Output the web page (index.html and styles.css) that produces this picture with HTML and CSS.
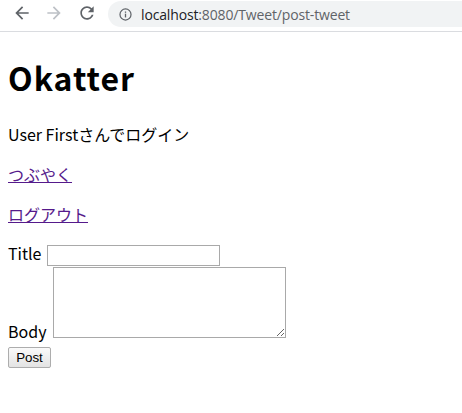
FILE: index.html
```html
<!DOCTYPE html>
<html lang="ja">
<head>
<meta charset="utf-8">
<title>Okatter</title>
<link rel="stylesheet" href="styles.css">
</head>
<body>
<div class="toolbar">
  <div class="nav">
    <svg class="icon" viewBox="0 0 24 24" width="20" height="20"><path fill="#5f6368" d="M20 11H7.83l5.59-5.59L12 4l-8 8 8 8 1.41-1.41L7.83 13H20v-2z"/></svg>
    <svg class="icon" viewBox="0 0 24 24" width="20" height="20"><path fill="#bdc1c6" d="M4 11h12.17l-5.59-5.59L12 4l8 8-8 8-1.41-1.41L16.17 13H4v-2z"/></svg>
    <svg class="icon" viewBox="0 0 24 24" width="20" height="20"><path fill="#5f6368" d="M17.65 6.35C16.2 4.9 14.21 4 12 4c-4.42 0-7.99 3.58-7.99 8s3.57 8 7.99 8c3.73 0 6.84-2.55 7.73-6h-2.08c-.82 2.33-3.04 4-5.650 4-3.31 0-6-2.690-6-6s2.69-6 6-6c1.66 0 3.14.69 4.22 1.78L13 11h7V4l-2.35 2.35z"/></svg>
  </div>
  <div class="omnibox">
    <svg class="info" viewBox="0 0 16 16" width="13" height="13"><circle cx="8" cy="8" r="6.8" fill="none" stroke="#5f6368" stroke-width="1.5"/><rect x="7.2" y="7" width="1.6" height="4.6" fill="#5f6368"/><rect x="7.2" y="4.3" width="1.6" height="1.6" fill="#5f6368"/></svg>
    <span class="url"><span class="host">localhost</span>:8080/Tweet/post-tweet</span>
  </div>
</div>
<main class="page">
  <h1 class="title">Okatter</h1>
  <p class="line">User Firstさんでログイン</p>
  <p class="line"><a class="link" href="#">つぶやく</a></p>
  <p class="line"><a class="link" href="#">ログアウト</a></p>
  <form class="form">
    <label class="label">Title <input class="input" type="text" name="title"></label><br>
    <label class="label">Body <textarea class="textarea" name="body"></textarea></label><br>
    <button class="button" type="button">Post</button>
  </form>
</main>
</body>
</html>
```
FILE: styles.css
```css
html, body {
  margin: 0;
  padding: 0;
  background: #fff;
}
body {
  font-family: "Noto Sans CJK JP", "Open Sans", sans-serif;
  color: #000;
}
.toolbar {
  height: 31px;
  border-bottom: 1px solid #dadce0;
  display: flex;
  align-items: flex-start;
  background: #fff;
}
.nav {
  display: flex;
  align-items: center;
  gap: 12px;
  box-sizing: border-box;
  padding: 3px 0 0 12px;
  width: 108px;
  flex: none;
}
.nav .icon:last-child {
  margin-left: 1px;
}
.omnibox {
  flex: 1;
  height: 26px;
  margin-top: 1px;
  background: #f1f3f4;
  border-radius: 13px 0 0 13px;
  display: flex;
  align-items: center;
  padding-left: 11px;
}
.info {
  margin-right: 9px;
}
.url {
  font-family: "Open Sans", "Noto Sans", sans-serif;
  font-size: 14px;
  color: #5f6368;
  letter-spacing: -0.15px;
}
.host {
  color: #202124;
}
.page {
  padding: 0 8px 8px;
}
.title {
  font-size: 32px;
  font-weight: bold;
  line-height: 48px;
  letter-spacing: 1px;
  margin: 21px 0 21px;
}
.line {
  font-size: 16px;
  line-height: 24px;
  margin: 16px 0;
}
.line:last-of-type {
  margin-bottom: 15px;
}
.link {
  color: #551a8b;
  text-decoration: underline;
}
.form {
  font-size: 16px;
  line-height: 24px;
  margin: 15px 0 16px;
}
.input {
  width: 173px;
  height: 21px;
  box-sizing: border-box;
  border: 1px solid #a9a9a9;
  padding: 1px 2px;
  font-size: 13.33px;
  vertical-align: baseline;
  margin-left: 2px;
}
.textarea {
  width: 233px;
  height: 71px;
  box-sizing: border-box;
  border: 1px solid #a9a9a9;
  vertical-align: baseline;
  margin-top: 1px;
  margin-left: 3px;
}
.button {
  font-family: Arial, "Liberation Sans", sans-serif;
  font-size: 13.33px;
  width: 43px;
  height: 21px;
  padding: 0;
  border: 1px solid #adadad;
  border-radius: 2px;
  background: linear-gradient(#fafafa, #e3e3e3);
  color: #000;
  margin-top: 3px;
}
```
